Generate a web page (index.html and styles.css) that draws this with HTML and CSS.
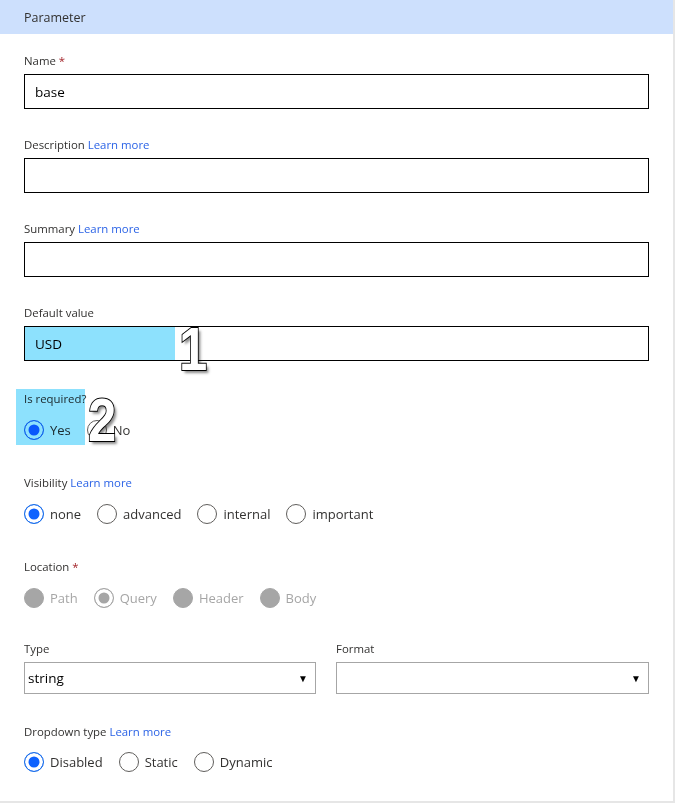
FILE: index.html
```html
<!DOCTYPE html>
<html lang="en">
<head>
    <meta charset="UTF-8">
    <meta name="viewport" content="width=device-width, initial-scale=1.0">
    <title>Parameter</title>
    <link rel="stylesheet" href="styles.css">
</head>
<body>
    <div class="panel">
        <div class="panel-header">Parameter</div>

        <div class="panel-body">
            <div class="field">
                <label class="field-label">Name <span class="req">*</span></label>
                <input class="text-input" type="text" value="base">
            </div>

            <div class="field">
                <label class="field-label">Description <a href="#" class="learn">Learn more</a></label>
                <input class="text-input" type="text">
            </div>

            <div class="field">
                <label class="field-label">Summary <a href="#" class="learn">Learn more</a></label>
                <input class="text-input" type="text">
            </div>

            <div class="field field-default">
                <label class="field-label">Default value</label>
                <div class="input-wrap">
                    <input class="text-input" type="text" value="USD">
                    <!-- callout highlight -->
                    <span class="highlight hl-default"></span>
                    <span class="callout callout-1">1</span>
                </div>
            </div>

            <div class="group group-required">
                <span class="highlight hl-required"></span>
                <div class="field-label">Is required?</div>
                <div class="radio-row">
                    <label class="radio"><input type="radio" name="required" checked> Yes</label>
                    <label class="radio"><input type="radio" name="required"> No</label>
                </div>
                <span class="callout callout-2">2</span>
            </div>

            <div class="group">
                <div class="field-label">Visibility <a href="#" class="learn">Learn more</a></div>
                <div class="radio-row">
                    <label class="radio"><input type="radio" name="visibility" checked> none</label>
                    <label class="radio"><input type="radio" name="visibility"> advanced</label>
                    <label class="radio"><input type="radio" name="visibility"> internal</label>
                    <label class="radio"><input type="radio" name="visibility"> important</label>
                </div>
            </div>

            <div class="group group-location">
                <div class="field-label">Location <span class="req">*</span></div>
                <div class="radio-row disabled">
                    <label class="radio"><input type="radio" class="solid" name="location" disabled> Path</label>
                    <label class="radio"><input type="radio" name="location" checked disabled> Query</label>
                    <label class="radio"><input type="radio" class="solid" name="location" disabled> Header</label>
                    <label class="radio"><input type="radio" class="solid" name="location" disabled> Body</label>
                </div>
            </div>

            <div class="select-row">
                <div class="select-field">
                    <div class="field-label">Type</div>
                    <div class="select">
                        <span class="select-value">string</span>
                        <span class="select-arrow">&#9660;</span>
                    </div>
                </div>
                <div class="select-field">
                    <div class="field-label">Format</div>
                    <div class="select">
                        <span class="select-value"></span>
                        <span class="select-arrow">&#9660;</span>
                    </div>
                </div>
            </div>

            <div class="group group-last">
                <div class="field-label">Dropdown type <a href="#" class="learn">Learn more</a></div>
                <div class="radio-row">
                    <label class="radio"><input type="radio" name="dropdown" checked> Disabled</label>
                    <label class="radio"><input type="radio" name="dropdown"> Static</label>
                    <label class="radio"><input type="radio" name="dropdown"> Dynamic</label>
                </div>
            </div>
        </div>
    </div>
</body>
</html>
```

FILE: styles.css
```css
body {
    margin: 0;
    font-family: "Open Sans", "Noto Sans", sans-serif;
    color: #323130;
    background: #ffffff;
}

.panel {
    width: 673px;
    height: 801px;
    border-right: 2px solid #e6e6e6;
    border-bottom: 2px solid #e6e6e6;
    background: #fff;
}

.panel-header {
    height: 34px;
    padding: 0 24px;
    display: flex;
    align-items: center;
    background-color: #cde0fd;
    font-size: 12.5px;
    color: #323130;
}

.panel-body {
    padding: 19px 24px 0 24px;
}

.field-label {
    display: block;
    height: 16px;
    line-height: 16px;
    font-size: 11.4px;
    color: #323130;
}

.req {
    color: #a4262c;
}

.learn {
    color: #2b63e6;
    text-decoration: none;
}

.field {
    margin-bottom: 28px;
}

.field .field-label {
    margin-bottom: 5px;
}

.field-default {
    margin-bottom: 30px;
}

.input-wrap {
    position: relative;
}

.text-input {
    display: block;
    box-sizing: border-box;
    width: 100%;
    height: 35px;
    margin: 0;
    padding: 0 10px;
    border: 1px solid #000;
    border-radius: 0;
    font-family: inherit;
    font-size: 13.5px;
    color: #000;
    outline: none;
}

/* annotation overlays */
.highlight {
    position: absolute;
    background: #8de1fd;
    mix-blend-mode: multiply;
    pointer-events: none;
}

.hl-default {
    left: 1px;
    top: 1px;
    width: 150px;
    height: 33px;
}

.callout {
    position: absolute;
    font-family: "Liberation Sans", Arial, sans-serif;
    font-weight: bold;
    font-size: 62px;
    line-height: 1;
    color: #fff;
    -webkit-text-stroke: 2px #000;
    paint-order: stroke fill;
    text-shadow: 3px 3px 3px rgba(0, 0, 0, 0.45);
    transform: scaleX(0.82);
    transform-origin: left top;
}

.callout-1 {
    left: 155px;
    top: -8px;
}

.callout-2 {
    left: 64px;
    top: -2px;
}

.group {
    position: relative;
    margin-bottom: 35px;
}

.group .field-label {
    margin-bottom: 13px;
}

.hl-required {
    left: -8px;
    top: -2px;
    width: 69px;
    height: 56px;
}

.group-location {
    margin-bottom: 33px;
}

.group-last {
    margin-bottom: 0;
}

.group-last .field-label {
    margin-bottom: 12px;
}

.radio-row {
    display: flex;
    align-items: center;
    height: 20px;
}

.radio {
    display: inline-flex;
    align-items: center;
    gap: 6px;
    margin-right: 16px;
    font-size: 13px;
    color: #323130;
}

.radio input {
    appearance: none;
    -webkit-appearance: none;
    box-sizing: border-box;
    width: 20px;
    height: 20px;
    margin: 0;
    border: 1px solid #605e5c;
    border-radius: 50%;
    background: #fff;
}

.radio input:checked {
    border: 1.5px solid #1a6fe8;
    background: #0f62fe;
    box-shadow: inset 0 0 0 3.5px #fff;
}

.disabled .radio {
    color: #a6a6a6;
}

.disabled .radio input {
    border-color: #a6a6a6;
}

.disabled .radio input.solid {
    background: #a6a6a6;
}

.disabled .radio input:checked {
    border: 1.5px solid #a6a6a6;
    background: #a6a6a6;
}

.select-row {
    display: grid;
    grid-template-columns: 292px 1fr;
    column-gap: 20px;
    margin-bottom: 30px;
}

.select-field .field-label {
    margin-bottom: 5px;
}

.select {
    box-sizing: border-box;
    height: 32px;
    display: flex;
    align-items: center;
    justify-content: space-between;
    padding: 0 7px 0 3px;
    border: 1px solid #a6a6a6;
    font-size: 13.5px;
    color: #000;
}

.select-arrow {
    font-size: 10px;
    color: #000;
}
```
